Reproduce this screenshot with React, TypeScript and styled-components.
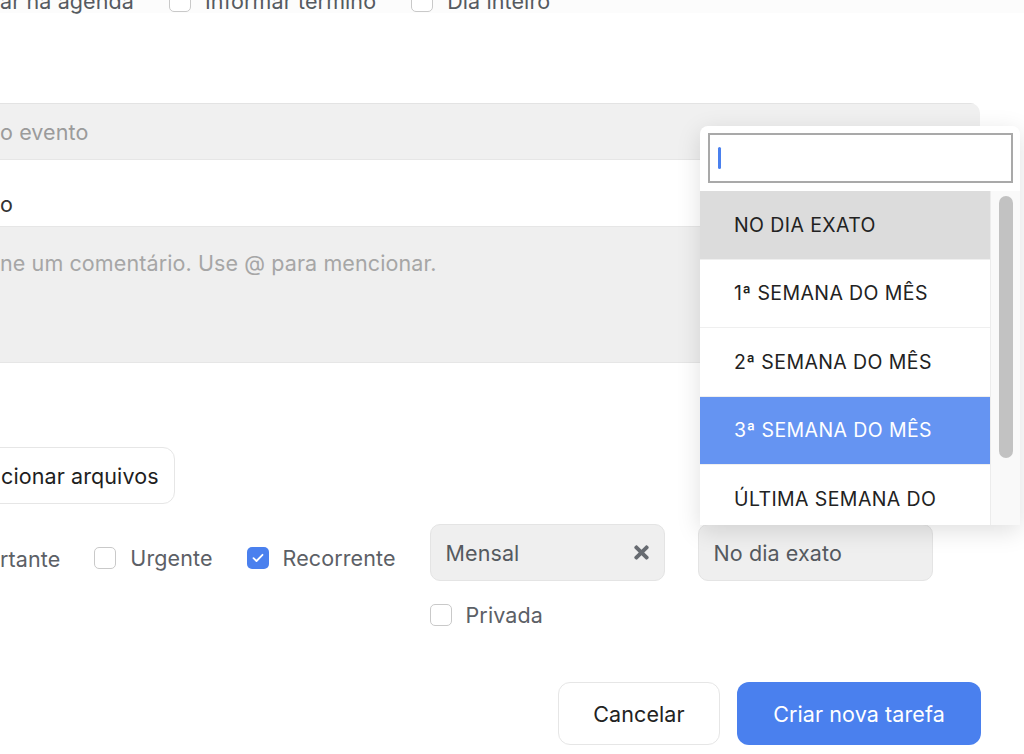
import React from "react";
import styled, { createGlobalStyle } from "styled-components";
import { FaTimes } from "react-icons/fa";

const GlobalStyle = createGlobalStyle`
  body {
    margin: 0;
    background: #ffffff;
    overflow: hidden;
  }
`;

const RECURRENCE_OPTIONS = [
  { label: "NO DIA EXATO", state: "active" },
  { label: "1ª SEMANA DO MÊS", state: "none" },
  { label: "2ª SEMANA DO MÊS", state: "none" },
  { label: "3ª SEMANA DO MÊS", state: "selected" },
  { label: "ÚLTIMA SEMANA DO", state: "none" },
];

const CheckBox = ({ checked }: { checked?: boolean }) => (
  <Box $checked={checked}>
    {checked && (
      <svg width="12" height="10" viewBox="0 0 12 10">
        <path
          d="M1.5 5.2 L4.5 8 L10.5 1.8"
          fill="none"
          stroke="#ffffff"
          strokeWidth="1.8"
          strokeLinecap="round"
          strokeLinejoin="round"
        />
      </svg>
    )}
  </Box>
);

const App = () => {
  return (
    <Page>
      <GlobalStyle />
      <Form>
        <Header>
          <TopText>ar na agenda</TopText>
          <CheckItem>
            <CheckBox />
            <TopText>Informar término</TopText>
          </CheckItem>
          <CheckItem>
            <CheckBox />
            <TopText>Dia inteiro</TopText>
          </CheckItem>
        </Header>

        <Fields>
          <EventInput>o evento</EventInput>
          <TitleRow>o</TitleRow>
          <CommentBox>ne um comentário. Use @ para mencionar.</CommentBox>
        </Fields>

        <FileButton>cionar arquivos</FileButton>

        <OptionsRow>
          <CheckSlot>
            <LabelText>rtante</LabelText>
          </CheckSlot>
          <CheckSlot>
            <CheckItem>
              <CheckBox />
              <LabelText>Urgente</LabelText>
            </CheckItem>
          </CheckSlot>
          <CheckSlot>
            <CheckItem>
              <CheckBox checked />
              <LabelText>Recorrente</LabelText>
            </CheckItem>
          </CheckSlot>
          <RecurrenceCol>
            <SelectRow>
              <Select>
                Mensal
                <FaTimes size={21} color="#676b71" />
              </Select>
              <Select>No dia exato</Select>
            </SelectRow>
            <CheckItem>
              <CheckBox />
              <LabelText>Privada</LabelText>
            </CheckItem>
          </RecurrenceCol>
        </OptionsRow>

        <Actions>
          <CancelButton>Cancelar</CancelButton>
          <PrimaryButton>Criar nova tarefa</PrimaryButton>
        </Actions>
      </Form>

      <Dropdown>
        <SearchBox>
          <Caret />
        </SearchBox>
        <ListWrap>
          <OptionList>
            {RECURRENCE_OPTIONS.map((item, idx) => (
              <Option key={idx} $state={item.state}>
                {item.label}
              </Option>
            ))}
          </OptionList>
          <Track>
            <Thumb />
          </Track>
        </ListWrap>
      </Dropdown>
    </Page>
  );
};

export default App;

const Page = styled.div`
  position: relative;
  width: 1024px;
  height: 754px;
  overflow: hidden;
  background: #ffffff;
  font-family: Inter, "Noto Sans", sans-serif;
  font-size: 21.5px;
  letter-spacing: 0.1px;
`;

const Form = styled.div`
  display: flex;
  flex-direction: column;
  width: 981px;
  margin-top: -11px;
`;

const Header = styled.div`
  display: flex;
  align-items: center;
  gap: 35px;
  height: 24px;
  margin-right: -43px;
  background: #fcfcfc;
`;

const TopText = styled.span`
  line-height: 24px;
  color: #555a60;
`;

const CheckItem = styled.label`
  display: flex;
  align-items: center;
  gap: 14px;
`;

const Box = styled.span<{ $checked?: boolean }>`
  box-sizing: border-box;
  width: 22px;
  height: 22px;
  border-radius: 5px;
  display: flex;
  align-items: center;
  justify-content: center;
  background: ${(p) => (p.$checked ? "#4a80ee" : "#ffffff")};
  border: ${(p) => (p.$checked ? "none" : "1.5px solid #c9c9c9")};
`;

const Fields = styled.div`
  display: flex;
  flex-direction: column;
  width: 980px;
  margin-top: 90px;
  border-radius: 0 10px 0 0;
  overflow: hidden;
  line-height: 24px;
`;

const EventInput = styled.div`
  box-sizing: border-box;
  height: 56px;
  display: flex;
  align-items: center;
  background: #f0f0f0;
  border-top: 1px solid #e3e3e3;
  color: #9b9b9b;
`;

const TitleRow = styled.div`
  box-sizing: border-box;
  height: 67px;
  display: flex;
  align-items: flex-end;
  padding-bottom: 10px;
  background: #ffffff;
  border-top: 1px solid #e6e6e6;
  color: #333333;
`;

const CommentBox = styled.div`
  box-sizing: border-box;
  height: 137px;
  padding-top: 24px;
  background: #efefef;
  border-top: 1px solid #e6e6e6;
  border-bottom: 1px solid #e6e6e6;
  color: #a6a6a6;
`;

const FileButton = styled.button`
  align-self: flex-start;
  box-sizing: border-box;
  height: 57px;
  margin-top: 84px;
  margin-left: -14px;
  padding: 0 15px 0 14px;
  background: #ffffff;
  border: 1.5px solid #e6e6e6;
  border-radius: 12px;
  font: inherit;
  letter-spacing: inherit;
  color: #1e1e1e;
`;

const OptionsRow = styled.div`
  display: flex;
  align-items: flex-start;
  gap: 34px;
  margin-top: 20px;
`;

const CheckSlot = styled.div`
  padding-top: 22px;
`;

const LabelText = styled.span`
  line-height: 24px;
  color: #5c6066;
`;

const RecurrenceCol = styled.div`
  display: flex;
  flex-direction: column;
  gap: 22px;
`;

const SelectRow = styled.div`
  display: flex;
  gap: 33px;
`;

const Select = styled.div`
  box-sizing: border-box;
  width: 235px;
  height: 57px;
  padding: 0 12px 0 15px;
  display: flex;
  align-items: center;
  justify-content: space-between;
  background: #efefef;
  border: 1.5px solid #e4e4e4;
  border-radius: 10px;
  color: #555a60;
`;

const Actions = styled.div`
  display: flex;
  justify-content: flex-end;
  gap: 17px;
  margin-top: 55px;
`;

const CancelButton = styled.button`
  box-sizing: border-box;
  width: 162px;
  height: 63px;
  background: #ffffff;
  border: 1.5px solid #e6e6e6;
  border-radius: 12px;
  font: inherit;
  letter-spacing: inherit;
  color: #222222;
`;

const PrimaryButton = styled.button`
  box-sizing: border-box;
  width: 244px;
  height: 63px;
  background: #4a80ee;
  border: none;
  border-radius: 12px;
  font: inherit;
  letter-spacing: inherit;
  color: #ffffff;
`;

// 드롭다운 (열린 상태)
const Dropdown = styled.div`
  position: absolute;
  left: 700px;
  top: 126px;
  width: 320px;
  height: 399px;
  display: flex;
  flex-direction: column;
  background: #ffffff;
  border-radius: 8px 8px 0 0;
  box-shadow: 0 6px 24px rgba(0, 0, 0, 0.13);
  overflow: hidden;
`;

const SearchBox = styled.div`
  box-sizing: border-box;
  height: 50px;
  margin: 7px 7px 0 8px;
  padding-left: 8px;
  display: flex;
  align-items: center;
  border: 2px solid #a9a9a9;
`;

const Caret = styled.span`
  width: 3px;
  height: 22px;
  border-radius: 2px;
  background: #4a80ee;
`;

const ListWrap = styled.div`
  flex: 1;
  display: flex;
  margin-top: 8px;
  overflow: hidden;
`;

const OptionList = styled.div`
  flex: 1;
  display: flex;
  flex-direction: column;
`;

const Option = styled.div<{ $state: string }>`
  box-sizing: border-box;
  flex-shrink: 0;
  height: 68.5px;
  padding-left: 34px;
  display: flex;
  align-items: center;
  border-bottom: 1px solid #efefef;
  font-size: 19.5px;
  letter-spacing: 0.4px;
  color: ${(p) => (p.$state === "selected" ? "#ffffff" : "#222222")};
  background: ${(p) =>
    p.$state === "selected"
      ? "#6594f2"
      : p.$state === "active"
      ? "#dcdcdc"
      : "#ffffff"};
`;

const Track = styled.div`
  box-sizing: border-box;
  width: 30px;
  padding: 5px 8px 0 8px;
  background: #f9f9f9;
  border-left: 1px solid #ececec;
`;

const Thumb = styled.div`
  width: 14px;
  height: 262px;
  border-radius: 7px;
  background: #c2c2c2;
`;
